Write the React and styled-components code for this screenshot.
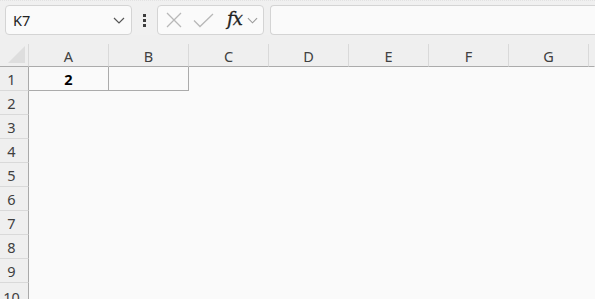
import React from "react";
import styled, { createGlobalStyle } from "styled-components";

const Global = createGlobalStyle`
  html, body { margin: 0; padding: 0; background: #fafafa; overflow: hidden; }
  body { font-family: "Segoe UI", "Noto Sans", "Open Sans", sans-serif; }
`;

const Page = styled.div`
  width: 595px;
  height: 299px;
  overflow: hidden;
  background: #fafafa;
`;

const Toolbar = styled.div`
  display: flex;
  align-items: flex-start;
  height: 35px;
  padding: 5px 0 0 5px;
  box-sizing: border-box;
  background: #f0f0f0;
  border-top: 1px dotted #e2e2e2;
`;

const Box = styled.div`
  box-sizing: border-box;
  height: 30px;
  margin-top: -1px;
  background: #fafafa;
  border: 1px solid #d4d4d4;
  border-radius: 4px;
  display: flex;
  align-items: center;
`;

const NameBox = styled(Box)`
  width: 127px;
  padding: 0 6px 0 7px;
  justify-content: space-between;
  font-size: 14.5px;
  color: #222;
`;

const Dots = styled.div`
  width: 25px;
  height: 30px;
  display: flex;
  flex-direction: column;
  align-items: center;
  justify-content: center;
  gap: 2px;
  margin-top: -1px;
`;

const Dot = styled.span`
  width: 3px;
  height: 3px;
  background: #3c3c3c;
`;

const IconBox = styled(Box)`
  width: 107px;
  padding: 0 0 0 8px;
`;

const IconSlot = styled.span`
  display: inline-flex;
  align-items: center;
  justify-content: center;
  flex: none;
  width: ${(p) => p.$w}px;
  margin-left: ${(p) => p.$ml || 0}px;
  height: 28px;
`;

const Fx = styled.span`
  font-family: "DejaVu Serif", "Liberation Serif", serif;
  font-style: italic;
  font-size: 18px;
  color: #222;
  line-height: 1;
  margin-top: -3px;
  letter-spacing: -1px;
  -webkit-text-stroke: 0.3px #222;
`;

const FormulaInput = styled(Box)`
  flex: 1;
  margin-left: 6px;
  border-right: none;
  border-radius: 4px 0 0 4px;
`;

const Gap = styled.div`
  height: 9px;
  background: #efefef;
`;

const Grid = styled.div`
  display: grid;
  grid-template-columns: 29px repeat(7, 80px) 1fr;
  grid-auto-rows: 24px;
  grid-template-rows: 23px;
`;

const Corner = styled.div`
  background: #efefef;
  border-bottom: 1px solid #ababab;
  border-right: 1px solid #d9d9d9;
  position: relative;
`;

const Triangle = styled.div`
  position: absolute;
  left: 8px;
  bottom: 3px;
  width: 0;
  height: 0;
  border-left: 17px solid transparent;
  border-bottom: 17px solid #dedede;
`;

const ColHead = styled.div`
  background: #efefef;
  border-bottom: 1px solid #ababab;
  border-right: 1px solid ${(p) => (p.$last ? "transparent" : "#d9d9d9")};
  display: flex;
  align-items: center;
  justify-content: center;
  font-size: 14.5px;
  color: #404040;
  padding-top: 1px;
`;

const RowHead = styled.div`
  background: #efefef;
  border-right: 1px solid #a9a9a9;
  border-bottom: 1px solid #d9d9d9;
  display: flex;
  align-items: center;
  justify-content: center;
  padding-right: 5px;
  font-size: 14.5px;
  color: #404040;
  ${(p) => p.$cut && "align-items: flex-start; padding-top: 4px; overflow: hidden;"}
`;

const Cell = styled.div`
  background: #fafafa;
  border-right: 1px solid ${(p) => (p.$bordered ? "#ababab" : "transparent")};
  border-bottom: 1px solid ${(p) => (p.$bordered ? "#ababab" : "transparent")};
  display: flex;
  align-items: center;
  justify-content: center;
  font-size: 14.5px;
  font-weight: 700;
  color: #000;
`;

const cols = ["A", "B", "C", "D", "E", "F", "G"];

function Chevron({ w = 12, color = "#555" }) {
  return (
    <svg width={w} height="7" viewBox="0 0 12 7" fill="none">
      <path d="M1 1 L6 6 L11 1" stroke={color} strokeWidth="1.2" />
    </svg>
  );
}

export default function App() {
  const rows = [1, 2, 3, 4, 5, 6, 7, 8, 9, 10];
  return (
    <Page>
      <Global />
      <Toolbar>
        <NameBox>
          <span>K7</span>
          <Chevron />
        </NameBox>
        <Dots>
          <Dot />
          <Dot />
          <Dot />
        </Dots>
        <IconBox>
          <IconSlot $w={16}>
            <svg width="16" height="16" viewBox="0 0 16 16">
              <path d="M1 1 L15 15 M15 1 L1 15" stroke="#b8b8b8" strokeWidth="1.3" />
            </svg>
          </IconSlot>
          <IconSlot $w={21} $ml={11}>
            <svg width="21" height="15" viewBox="0 0 21 15">
              <path d="M1 7.5 L7 13.5 L20 1" stroke="#b8b8b8" strokeWidth="1.3" fill="none" />
            </svg>
          </IconSlot>
          <IconSlot $w={17} $ml={12}>
            <Fx>fx</Fx>
          </IconSlot>
          <IconSlot $w={12} $ml={3}>
            <Chevron w={11} color="#9a9a9a" />
          </IconSlot>
        </IconBox>
        <FormulaInput />
      </Toolbar>
      <Gap />
      <Grid>
        <Corner>
          <Triangle />
        </Corner>
        {cols.map((c) => (
          <ColHead key={c}>{c}</ColHead>
        ))}
        <ColHead $last />
        {rows.map((r) => (
          <React.Fragment key={r}>
            <RowHead $cut={r === 10}>{r}</RowHead>
            {cols.map((c) => (
              <Cell key={c} $bordered={r === 1 && (c === "A" || c === "B")}>
                {r === 1 && c === "A" ? "2" : ""}
              </Cell>
            ))}
            <Cell />
          </React.Fragment>
        ))}
      </Grid>
    </Page>
  );
}
